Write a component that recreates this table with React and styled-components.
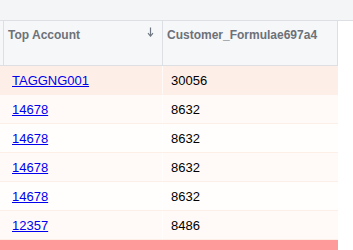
import React from "react"
import styled, { createGlobalStyle } from "styled-components"

const GlobalStyle = createGlobalStyle`
  body {
    margin: 0;
    background: #ffffff;
    font-family: "Liberation Sans", Arial, sans-serif;
  }
`

const Page = styled.div`
  width: 353px;
  height: 250px;
  overflow: hidden;
  background: #ffffff;
`

const TopBand = styled.div`
  height: 20px;
  background: #f4f5f7;
  border-bottom: 1px solid #dcdfe3;
`

const Table = styled.div`
  width: 338px;
`

const HeaderRow = styled.div`
  display: grid;
  grid-template-columns: 3px 159px 176px;
  height: 44px;
  background: #f5f7f9;
  border-bottom: 1px solid #dcdfe3;
`

const HeaderCell = styled.div`
  display: flex;
  align-items: flex-start;
  justify-content: space-between;
  padding: 7px 8px 0 4px;
  border-left: 1px solid #dcdfe3;
  border-right: ${(p) => (p.$last ? "1px solid #dcdfe3" : "none")};
  font-size: 12px;
  line-height: 14px;
  font-weight: bold;
  color: #6d7178;
  white-space: nowrap;
`

const SortArrow = styled.svg`
  display: block;
  width: 7px;
  height: 10px;
  margin-top: -1px;
`

const Row = styled.div`
  display: grid;
  grid-template-columns: 162px 176px;
  height: 28px;
  align-items: center;
  background: ${(p) => p.$bg};
  border-bottom: 1px solid #fbefe8;
  font-size: 13px;
`

const LinkCell = styled.div`
  padding-left: 12px;

  a {
    color: #0000ee;
    text-decoration: underline;
  }
`

const ValueCell = styled.div`
  height: 100%;
  display: flex;
  align-items: center;
  padding-left: 8px;
  border-left: 1px solid rgba(255, 255, 255, 0.7);
  color: #000000;
`

const TotalBar = styled.div`
  height: 12px;
  background: #ff9a9a;
`

const rows = [
  { account: "TAGGNG001", value: "30056", bg: "#fdefe7" },
  { account: "14678", value: "8632", bg: "#fffaf8" },
  { account: "14678", value: "8632", bg: "#fffefd" },
  { account: "14678", value: "8632", bg: "#fffaf8" },
  { account: "14678", value: "8632", bg: "#fffefd" },
  { account: "12357", value: "8486", bg: "#fffaf8" },
]

const App = () => {
  return (
    <Page>
      <GlobalStyle />
      <TopBand />
      <Table>
        <HeaderRow>
          <div />
          <HeaderCell>
            <span>Top Account</span>
            <SortArrow viewBox="0 0 7 10">
              <path d="M3.5 0.5V9" stroke="#6f7782" strokeWidth="1.2" fill="none" />
              <path d="M1 6.2L3.5 9.2L6 6.2" stroke="#6f7782" strokeWidth="1.1" fill="none" />
            </SortArrow>
          </HeaderCell>
          <HeaderCell $last>
            <span>Customer_Formulae697a4</span>
          </HeaderCell>
        </HeaderRow>
        {rows.map((r, i) => (
          <Row key={i} $bg={r.bg}>
            <LinkCell>
              <a href="#">{r.account}</a>
            </LinkCell>
            <ValueCell>{r.value}</ValueCell>
          </Row>
        ))}
        <TotalBar />
      </Table>
    </Page>
  )
}

export default App
